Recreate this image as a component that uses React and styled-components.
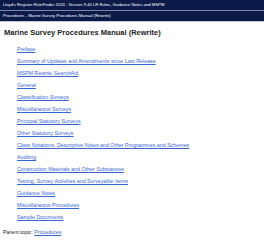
import React from 'react';
import styled, { createGlobalStyle } from 'styled-components';

const GlobalStyle = createGlobalStyle`
  html, body {
    margin: 0;
    padding: 0;
    background: #fff;
    font-family: "Liberation Sans", Arial, sans-serif;
  }
`;

const topics = [
  'Preface',
  'Summary of Updates and Amendments since Last Release',
  'MSPM Rewrite SearchAid',
  'General',
  'Classification Surveys',
  'Miscellaneous Surveys',
  'Principal Statutory Surveys',
  'Other Statutory Surveys',
  'Class Notations, Descriptive Notes and Other Programmes and Schemes',
  'Auditing',
  'Construction Materials and Other Substances',
  'Testing, Survey Activities and Surveyable Items',
  'Guidance Notes',
  'Miscellaneous Procedures',
  'Sample Documents',
];

const Page = styled.div`
  width: 264px;
  height: 240px;
  overflow: hidden;
`;

const Bar = styled.div`
  height: 10px;
  background: #0b1a48;
  color: #fff;
  font-size: 4.2px;
  line-height: 10px;
  padding-left: 3px;
  white-space: nowrap;
  border-bottom: 1px solid ${(p) => p.$edge};
`;

const Content = styled.div`
  padding: 5px 4px 0;
`;

const Title = styled.h1`
  margin: 0 0 7px;
  font-size: 7.5px;
  line-height: 11px;
  font-weight: bold;
  color: #222;
`;

const List = styled.ul`
  list-style: none;
  margin: 0;
  padding: 0 0 0 13px;
`;

const Item = styled.li`
  height: 12px;
  font-size: 5.3px;
  line-height: 8px;
`;

const Link = styled.a`
  color: #3566d6;
  text-decoration: underline;
`;

const Parent = styled.div`
  margin-top: 4px;
  margin-left: -1px;
  font-size: 5.3px;
  color: #222;
`;

export default function App() {
  return (
    <Page>
      <GlobalStyle />
      <Bar $edge="#7d86a3">Lloyd's Register RuleFinder 2024 - Version 9.40 LR Rules, Guidance Notes and MSPM</Bar>
      <Bar $edge="#c4c7cf">Procedures - Marine Survey Procedures Manual (Rewrite)</Bar>
      <Content>
        <Title>Marine Survey Procedures Manual (Rewrite)</Title>
        <List>
          {topics.map((t) => (
            <Item key={t}>
              <Link href="#">{t}</Link>
            </Item>
          ))}
        </List>
        <Parent>
          Parent topic: <Link href="#">Procedures</Link>
        </Parent>
      </Content>
    </Page>
  );
}
